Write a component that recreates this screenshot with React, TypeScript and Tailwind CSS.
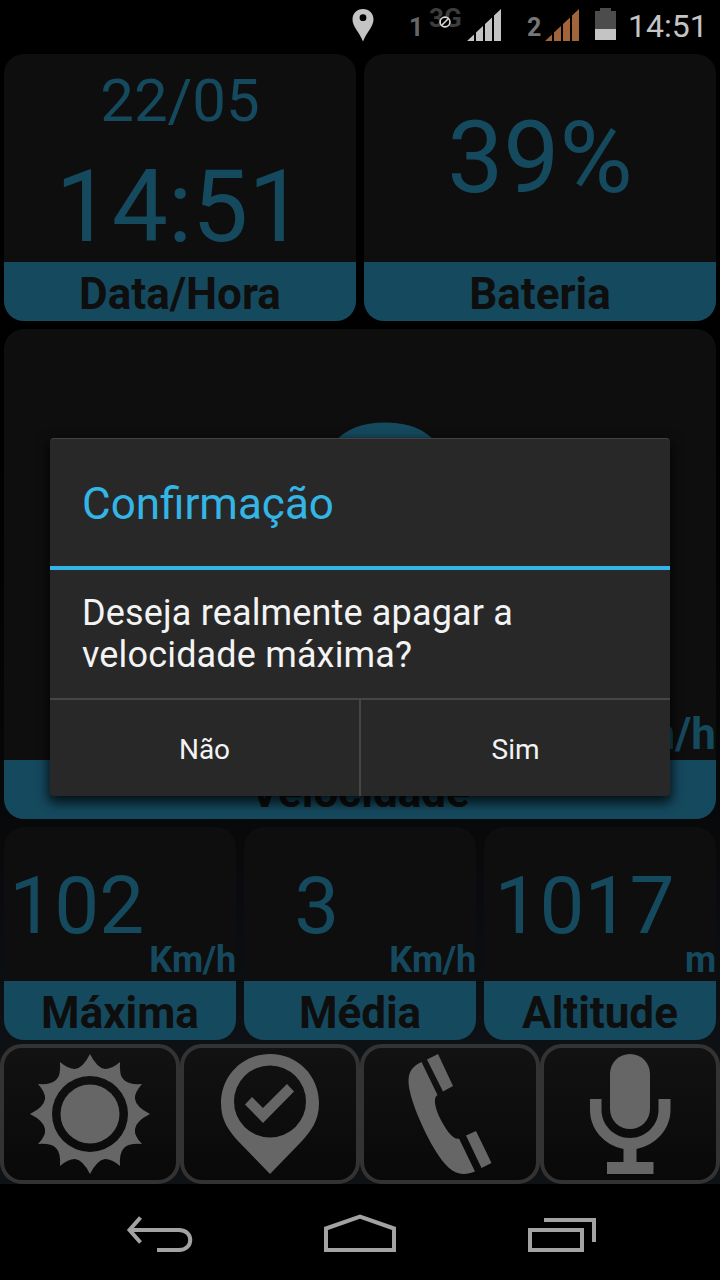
import type { ReactNode } from 'react';

type CardProps = {
  label: string;
  className: string;
  children: ReactNode;
};

const Card = ({ label, className, children }: CardProps) => {
  return (
    <section className={`flex flex-col overflow-hidden rounded-[20px] bg-[#0e0e0e] ${className}`}>
      <div className="flex min-h-0 flex-1 flex-col">{children}</div>
      <h2 className="h-[59px] shrink-0 bg-[#15495e] text-center text-[44px] leading-[65px] font-bold text-[#0e0e0e]">
        {label}
      </h2>
    </section>
  );
};

type MetricProps = {
  value: string;
  unit: string;
};

const Metric = ({ value, unit }: MetricProps) => {
  return (
    <div className="flex h-full items-end">
      <div className="flex-1 pb-[35px] text-center text-[80px] leading-[80px]">{value}</div>
      <div className="text-[36px] leading-[42px] font-bold tracking-[-0.2px]">{unit}</div>
    </div>
  );
};

const SignalBars = ({ className }: { className: string }) => {
  return (
    <svg width="34" height="33" viewBox="0 0 34 33" className={className} fill="currentColor">
      <path d="M0 32 7 25.500V32ZM9 32V23.500L16 17V32ZM18 32V15L25 8.500V32ZM27 32V6.500L34 0V32Z" />
    </svg>
  );
};

const StatusBar = () => {
  return (
    <header className="flex h-[50px] shrink-0 items-start bg-black pl-[352px] text-[#c4c4c4]">
      <svg width="22" height="33" viewBox="0 0 22 33" className="mt-[9px]" fill="currentColor">
        <path
          fillRule="evenodd"
          d="M11 0C4.800 0 .5 4.600.5 10.500c0 7 6.500 12 10.500 22 4-10 10.500-15 10.500-22C21.500 4.600 17.200 0 11 0Zm0 5.300a3.400 3.400 0 1 1 0 6.800 3.400 3.400 0 0 1 0-6.800Z"
        />
      </svg>
      <span className="mt-[14px] ml-[35px] w-[14px] text-[25px] leading-[28px] font-bold text-[#666]">1</span>
      <div className="relative mt-[4px] ml-[6px] w-[35px] text-[26px] leading-[28px] font-bold text-[#3d3d3d]">
        3G
        <svg width="14" height="14" viewBox="0 0 14 14" className="absolute top-[11px] left-[9px]">
          <circle cx="7" cy="7" r="4.900" fill="#000" stroke="#d8d8d8" strokeWidth="1.600" />
          <path d="m3.800 10.200 6.400-6.400" stroke="#d8d8d8" strokeWidth="1.600" />
        </svg>
      </div>
      <SignalBars className="mt-[9px] ml-[3px] text-[#c4c4c4]" />
      <span className="mt-[14px] ml-[26px] w-[14px] text-[25px] leading-[28px] font-bold text-[#777]">2</span>
      <SignalBars className="mt-[9px] ml-[4px] text-[#a2643a]" />
      <svg width="21" height="32" viewBox="0 0 21 32" className="mt-[8px] ml-[16px]">
        <path d="M0 3h5V0h11v3h5v18H0Z" fill="#4c4c4c" />
        <path d="M0 21h21v11H0Z" fill="#c4c4c4" />
      </svg>
      <span className="mt-[7px] ml-[12px] text-[32px] leading-[38px]">14:51</span>
    </header>
  );
};

const Shortcut = ({ children }: { children: ReactNode }) => {
  return (
    <button className="flex h-[140px] items-center justify-center rounded-[22px] border-4 border-[#333] bg-linear-to-b from-[#121212] to-[#090909] text-[#666]">
      <svg width="120" height="120" viewBox="0 0 120 120" fill="currentColor">
        {children}
      </svg>
    </button>
  );
};

const Dialog = () => {
  return (
    <div
      role="dialog"
      className="absolute top-[438px] left-[50px] flex h-[358px] w-[620px] flex-col rounded-[4px] border-t border-[#424242] bg-[#282828] shadow-[0_5px_12px_2px_rgba(0,0,0,0.75)]"
    >
      <h1 className="h-[127px] pl-[32px] text-[44px] leading-[130px] text-[#33b5e5]">Confirmação</h1>
      <div className="h-[4px] bg-[#33b5e5]" />
      <p className="h-[128px] pt-[22px] pl-[32px] text-[36px] leading-[42px] tracking-[0.16px] text-[#f3f3f3]">
        Deseja realmente apagar a<br />
        velocidade máxima?
      </p>
      <div className="grid flex-1 grid-cols-[311px_309px] border-t-2 border-[#464646] text-[28px] text-[#f3f3f3]">
        <button className="border-r-2 border-[#464646] pt-[3px]">Não</button>
        <button className="pt-[3px]">Sim</button>
      </div>
    </div>
  );
};

const App = () => {
  return (
    <div className="relative flex h-[1280px] w-[720px] flex-col overflow-hidden bg-black font-[Roboto,sans-serif]">
      <StatusBar />

      <main className="flex h-[1134px] shrink-0 flex-col bg-linear-to-b from-black to-[#0f1215] to-90% pt-[4px] text-[#15495e]">
        <div className="grid grid-cols-2 gap-[8px] px-[4px]">
          <Card label="Data/Hora" className="h-[267px]">
            <div className="mt-[12px] text-center text-[60px] leading-[70px]">22/05</div>
            <div className="mt-[11px] text-center text-[100px] leading-[120px]">14:51</div>
          </Card>
          <Card label="Bateria" className="h-[267px]">
            <div className="mt-[44px] text-center text-[100px] leading-[120px]">39%</div>
          </Card>
        </div>

        <div className="mt-[8px] px-[4px]">
          <Card label="Velocidade" className="h-[490px]">
            <div className="flex h-full items-end">
              <div className="flex-1 pb-[36px] pl-[157px] text-center text-[320px] leading-[360px]">0</div>
              <div className="text-[44px] leading-[51px] font-bold">Km/h</div>
            </div>
          </Card>
        </div>

        <div className="mt-[8px] grid grid-cols-3 gap-[8px] px-[4px]">
          <Card label="Máxima" className="h-[213px]">
            <Metric value="102" unit="Km/h" />
          </Card>
          <Card label="Média" className="h-[213px]">
            <Metric value="3" unit="Km/h" />
          </Card>
          <Card label="Altitude" className="h-[213px]">
            <Metric value="1017" unit="m" />
          </Card>
        </div>

        <nav className="mt-[4px] grid grid-cols-4">
          <Shortcut>
            <path
              fillRule="evenodd"
              d="M60 0Q67 14 75 15Q82 15 90 8Q89 22 94 26Q99 31 112 30Q104 39 105 45Q106 53 120 60Q106 67 105 75Q104 82 112 90Q99 89 94 94Q89 99 90 112Q82 105 75 105Q67 106 60 120Q53 106 45 105Q38 105 30 112Q31 99 26 94Q21 89 8 90Q16 82 15 75Q14 67 0 60Q14 53 15 45Q16 39 8 30Q21 31 26 26Q31 22 30 8Q38 15 45 15Q53 14 60 0ZM60 22a38 38 0 1 0 0 76 38 38 0 0 0 0-76Z"
            />
            <circle cx="60" cy="60" r="29.500" />
          </Shortcut>
          <Shortcut>
            <path
              fillRule="evenodd"
              d="M60 0C32 0 11 22 11 49C11 67 19 77 29 88L60 120L91 88C101 77 109 67 109 49C109 22 88 0 60 0ZM60 11.500a36 36 0 1 1 0 72 36 36 0 0 1 0-72Z"
            />
            <path d="m42 43-7 7.500 18 18.500 31-31.500-7-7.500-24 24Z" />
          </Shortcut>
          <Shortcut>
            <path
              transform="translate(20 0)"
              d="M17 5.500 28 0 43 32 33 37.500ZM56 81.500 66 77 81.500 109 71.500 114ZM11.500 8 27.500 41C22 44 26 57 32 68C38 79 44 86 49 84.500L65 117.500C47 125 37 115 25 96C13 76-1.500 43-1.500 27C-1.500 17 3 12 11.500 8Z"
            />
          </Shortcut>
          <Shortcut>
            <rect x="40" y="0" width="40" height="75" rx="20" />
            <path d="M20 45H31.500V56C31.500 71 44 84 60 84S88.500 71 88.500 56V45H100.500V56C100.500 75 86 91 66.500 95V108H83.500V120H37V108H53.500V95C34 91 20 75 20 56Z" />
          </Shortcut>
        </nav>
      </main>

      <footer className="flex h-[96px] shrink-0 bg-black">
        <svg width="720" height="96" viewBox="0 0 720 96" fill="none" stroke="#a3a3a3" strokeWidth="4">
          <path d="M140.500 33.500 129.500 46 140.500 58.500M130 46H179C194 46 194 66 179 66H157" />
          <path d="M326 66V44.500L360 32.500 394 44.500V66Z" />
          <path d="M530 46H582V66H530ZM544 36H594V58" />
        </svg>
      </footer>

      <Dialog />
    </div>
  );
};

export default App;
